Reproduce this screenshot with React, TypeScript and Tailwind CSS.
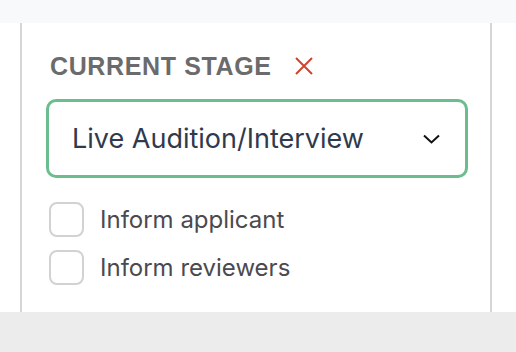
import React from "react";

export default function App() {
  return (
    <div className="w-[516px] h-[352px] bg-[#ececec] flex flex-col" style={{ fontFamily: "Inter, 'Liberation Sans', sans-serif" }}>
      <div className="h-[23px] bg-[#f8f9fa] shrink-0" />
      <div className="h-[289px] bg-white flex shrink-0">
        <div className="ml-[20px] w-[472px] border-l-2 border-r-2 border-[#d6d6d6] pl-[24px] pr-[22px] pt-[27px]">
          <div className="flex items-center h-[32px] pl-[4px]">
            <span className="text-[25px] font-bold tracking-[0.025em] text-[#6b6b6b] leading-none" style={{ fontFamily: "'Liberation Sans', Arial, sans-serif" }}>
              CURRENT STAGE
            </span>
            <svg className="ml-[23px]" width="18" height="18" viewBox="0 0 18 18" fill="none">
              <path d="M1 1L17 17M17 1L1 17" stroke="#d1432d" strokeWidth="2" />
            </svg>
          </div>
          <div className="mt-[17px] h-[79px] border-[3px] border-[#6bbd8e] rounded-[10px] flex items-center justify-between pl-[23px] pr-[25px]">
            <span className="text-[27px] text-[#2f3a4c] leading-none">Live Audition/Interview</span>
            <svg width="17" height="10" viewBox="0 0 17 10" fill="none">
              <path d="M1 1.5L8.5 8.5L16 1.5" stroke="#111" strokeWidth="2" />
            </svg>
          </div>
          <div className="mt-[24px] flex flex-col gap-[13px] pl-[3px]">
            <label className="flex items-center h-[35px]">
              <span className="w-[35px] h-[35px] border-[2.5px] border-[#d2d2d2] rounded-[8px] shrink-0" />
              <span className="ml-[16px] text-[24px] text-[#4a4a4f] leading-none">Inform applicant</span>
            </label>
            <label className="flex items-center h-[35px]">
              <span className="w-[35px] h-[35px] border-[2.5px] border-[#d2d2d2] rounded-[8px] shrink-0" />
              <span className="ml-[16px] text-[24px] text-[#4a4a4f] leading-none">Inform reviewers</span>
            </label>
          </div>
        </div>
      </div>
    </div>
  );
}
